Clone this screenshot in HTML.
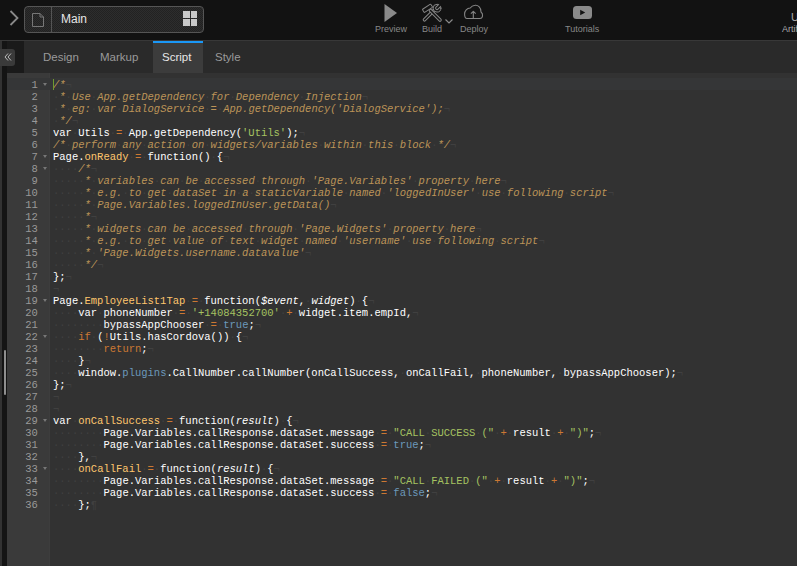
<!DOCTYPE html>
<html><head><meta charset="utf-8">
<style>
*{margin:0;padding:0;box-sizing:border-box}
html,body{width:797px;height:566px;overflow:hidden;background:#121212;font-family:"Liberation Sans",sans-serif}
.abs{position:absolute}
#top{left:0;top:0;width:797px;height:40px;background:#121212}
#topline{left:0;top:40px;width:797px;height:1px;background:#383838}
#lstrip{left:0;top:41px;width:2px;height:525px;background:#323232}
#lblack{left:2px;top:41px;width:5px;height:525px;background:#141414}
#tabdark{left:7px;top:41px;width:17px;height:32px;background:#1a1a1a}
#tabbar{left:24px;top:41px;width:773px;height:32px;background:#2a2a2a}
#collapse{left:0;top:49px;width:15px;height:17px;background:#3a3a3a;border-radius:0 3px 3px 0}
.tab{position:absolute;top:41px;height:32px;font-size:11.5px;color:#9a9a9a;line-height:32px}
#activetab{left:153px;top:41px;width:50px;height:32px;background:#3c3c3c;border-top:2px solid #1b98f7}
#gutter{left:7px;top:73px;width:43px;height:493px;background:#3a3a3a;border-right:1px solid #3d3d3d}
#code{left:50px;top:73px;width:747px;height:493px;background:#323232}
#activeline{left:50px;top:78px;width:747px;height:12px;background:#353637}
#gactive{left:7px;top:78px;width:43px;height:12px;background:#353637}
#glines{left:7px;top:79px;width:43px}
.gl{position:relative;height:12px;line-height:12px;font-family:"Liberation Mono",monospace;font-size:11.5px;color:#999;text-align:right;padding-right:12px}
.gl b{font-weight:normal;display:inline-block;transform:scaleX(0.913);transform-origin:100% 0}
.fw{position:absolute;right:3px;top:4px;width:0;height:0;border-left:2.5px solid transparent;border-right:2.5px solid transparent;border-top:3px solid #777}
#lines{left:53px;top:79px;transform-origin:0 0;transform:scaleX(0.8935)}
.ln{height:12px;line-height:12px;white-space:pre;font-family:"Liberation Mono",monospace;font-size:11.75px;color:#fff}
.c{color:#BC9458;font-style:italic}
.k{color:#CC7833}
.s{color:#A5C261}
.b{color:#6C99BB}
.f{color:#FFC66D}
.p{font-style:italic}
.t{color:#fff}
.i{color:#404040}
#cursor{left:53px;top:79px;width:1px;height:11px;background:#6f9a2e}
#scrollthumb{left:4px;top:350px;width:2px;height:45px;background:#8e8e8e;border-radius:1px}
.tb{position:absolute;top:25px;font-size:9px;color:#888;line-height:8px;white-space:nowrap}
</style></head><body>
<div class="abs" id="top"></div>
<!-- chevron -->
<svg class="abs" style="left:8px;top:8px" width="14" height="20" viewBox="0 0 14 20"><path d="M2.5 3 L9.5 10 L2.5 17" fill="none" stroke="#8a8a8a" stroke-width="1.8"/></svg>
<!-- file box -->
<div class="abs" style="left:24px;top:6px;width:180px;height:27px;border:1px solid #555;border-radius:4px;background:repeating-conic-gradient(#2d2d2d 0 25%,#222 0 50%) 0 0/2px 2px"></div>
<div class="abs" style="left:51px;top:7px;width:1px;height:25px;background:#555"></div>
<svg class="abs" style="left:31px;top:12px" width="15" height="17" viewBox="0 0 15 17"><path d="M1.5 1.5 H9 L12.5 5 V14.5 H1.5 Z M9 1.5 V5 H12.5" fill="none" stroke="#777" stroke-width="1"/></svg>
<div class="abs" style="left:61px;top:11px;font-size:12px;color:#e6e6e6;line-height:16px">Main</div>
<svg class="abs" style="left:182px;top:11px" width="16" height="15" viewBox="0 0 16 15"><rect x="1" y="0" width="7" height="7" fill="#c8c8c8"/><rect x="9" y="0" width="6" height="7" fill="#c8c8c8"/><rect x="1" y="8" width="7" height="7" fill="#c8c8c8"/><rect x="9" y="8" width="6" height="7" fill="#c8c8c8"/></svg>
<!-- toolbar -->
<svg class="abs" style="left:383px;top:3px" width="16" height="21" viewBox="0 0 16 21"><path d="M1.5 1 L14 10 L1.5 19 Z" fill="#8a8a8a"/></svg>
<div class="tb" style="left:375px">Preview</div>
<svg class="abs" style="left:418px;top:0px" width="26" height="26" viewBox="0 0 26 26">
<g stroke-linecap="round">
<line x1="6.5" y1="19.8" x2="15.5" y2="10.8" stroke="#858585" stroke-width="3.6"/>
<line x1="6.5" y1="19.8" x2="15.5" y2="10.8" stroke="#121212" stroke-width="1.5"/>
<circle cx="19" cy="8.2" r="3.9" fill="#121212" stroke="#858585" stroke-width="1"/>
<g transform="translate(19 8.2) rotate(-45)"><rect x="-0.5" y="-1.4" width="5" height="2.8" fill="#121212"/><path d="M3.6 -1.4 H0 A1.4 1.4 0 0 0 0 1.4 H3.6" fill="none" stroke="#858585" stroke-width="1"/></g>
<line x1="12.5" y1="10.5" x2="22" y2="20" stroke="#858585" stroke-width="3.6"/>
<line x1="12.5" y1="10.5" x2="22" y2="20" stroke="#121212" stroke-width="1.5"/>
<g transform="translate(9.5 8.3) rotate(-33)"><rect x="-5" y="-1.9" width="10" height="3.8" rx="0.8" fill="#121212" stroke="#858585" stroke-width="1"/></g>
</g></svg>
<svg class="abs" style="left:444px;top:17.5px" width="10" height="7" viewBox="0 0 10 7"><path d="M1.5 1.5 L5 5 L8.5 1.5" fill="none" stroke="#8a8a8a" stroke-width="1.2"/></svg>
<div class="tb" style="left:422px">Build</div>
<svg class="abs" style="left:458px;top:0px" width="32" height="24" viewBox="0 0 32 24"><g fill="none" stroke="#858585" stroke-width="1.1" stroke-linejoin="round"><path d="M9 18.5 H22 C24.8 18.5 25.6 14 23 12 C23.3 7.8 20 4.8 17 5.3 C15 5.5 13.3 6.5 12.2 8 C9 8.2 6.6 10.8 6.6 14 C6.6 16.5 7.6 18.5 9 18.5 Z"/><path d="M15.3 18.5 V11.3 M12.9 13.7 L15.3 11.3 L17.7 13.7"/></g></svg>
<div class="tb" style="left:460px">Deploy</div>
<svg class="abs" style="left:572px;top:5px" width="21" height="15" viewBox="0 0 21 15"><rect x="1" y="1" width="19" height="13" rx="3.5" fill="#8a8a8a"/><path d="M8.2 4.8 L13.2 7.5 L8.2 10.2 Z" fill="#121212"/></svg>
<div class="tb" style="left:565px">Tutorials</div>
<div class="abs" style="left:791px;top:12px;font-size:11px;color:#aaa;line-height:10px">U</div>
<div class="tb" style="left:782px;color:#aaa">Artifacts</div>

<div class="abs" id="topline"></div>
<div class="abs" id="lstrip"></div>
<div class="abs" id="lblack"></div>
<div class="abs" id="tabdark"></div>
<div class="abs" id="tabbar"></div>
<div class="abs" id="collapse"></div>
<svg class="abs" style="left:3px;top:52px" width="10" height="10" viewBox="0 0 10 10"><path d="M5 1.5 L2 5 L5 8.5 M8 1.5 L5 5 L8 8.5" fill="none" stroke="#bbb" stroke-width="1"/></svg>
<div class="abs" id="activetab"></div>
<div class="tab" style="left:43px">Design</div>
<div class="tab" style="left:100px">Markup</div>
<div class="tab" style="left:162px;color:#e8e8e8">Script</div>
<div class="tab" style="left:215px">Style</div>

<div class="abs" id="gutter"></div>
<div class="abs" id="code"></div>
<div class="abs" id="activeline"></div>
<div class="abs" id="gactive"></div>
<div class="abs" id="glines">
<div class="gl"><b>1</b><span class="fw"></span></div>
<div class="gl"><b>2</b></div>
<div class="gl"><b>3</b></div>
<div class="gl"><b>4</b></div>
<div class="gl"><b>5</b></div>
<div class="gl"><b>6</b></div>
<div class="gl"><b>7</b><span class="fw"></span></div>
<div class="gl"><b>8</b><span class="fw"></span></div>
<div class="gl"><b>9</b></div>
<div class="gl"><b>10</b></div>
<div class="gl"><b>11</b></div>
<div class="gl"><b>12</b></div>
<div class="gl"><b>13</b></div>
<div class="gl"><b>14</b></div>
<div class="gl"><b>15</b></div>
<div class="gl"><b>16</b></div>
<div class="gl"><b>17</b></div>
<div class="gl"><b>18</b></div>
<div class="gl"><b>19</b><span class="fw"></span></div>
<div class="gl"><b>20</b></div>
<div class="gl"><b>21</b></div>
<div class="gl"><b>22</b><span class="fw"></span></div>
<div class="gl"><b>23</b></div>
<div class="gl"><b>24</b></div>
<div class="gl"><b>25</b></div>
<div class="gl"><b>26</b></div>
<div class="gl"><b>27</b></div>
<div class="gl"><b>28</b></div>
<div class="gl"><b>29</b><span class="fw"></span></div>
<div class="gl"><b>30</b></div>
<div class="gl"><b>31</b></div>
<div class="gl"><b>32</b></div>
<div class="gl"><b>33</b><span class="fw"></span></div>
<div class="gl"><b>34</b></div>
<div class="gl"><b>35</b></div>
<div class="gl"><b>36</b></div>
</div>
<div class="abs" id="lines">
<div class="ln"><span class="c">/*</span><span class="i">¬</span></div>
<div class="ln"><span class="i">·</span><span class="c">*</span><span class="i">·</span><span class="c">Use</span><span class="i">·</span><span class="c">App.getDependency</span><span class="i">·</span><span class="c">for</span><span class="i">·</span><span class="c">Dependency</span><span class="i">·</span><span class="c">Injection</span><span class="i">¬</span></div>
<div class="ln"><span class="i">·</span><span class="c">*</span><span class="i">·</span><span class="c">eg:</span><span class="i">·</span><span class="c">var</span><span class="i">·</span><span class="c">DialogService</span><span class="i">·</span><span class="c">=</span><span class="i">·</span><span class="c">App.getDependency(&#x27;DialogService&#x27;);</span><span class="i">¬</span></div>
<div class="ln"><span class="i">·</span><span class="c">*/</span><span class="i">¬</span></div>
<div class="ln"><span class="t">var</span><span class="i">·</span><span class="t">Utils</span><span class="i">·</span><span class="k">=</span><span class="i">·</span><span class="t">App.getDependency(</span><span class="s">&#x27;Utils&#x27;</span><span class="t">);</span><span class="i">¬</span></div>
<div class="ln"><span class="c">/*</span><span class="i">·</span><span class="c">perform</span><span class="i">·</span><span class="c">any</span><span class="i">·</span><span class="c">action</span><span class="i">·</span><span class="c">on</span><span class="i">·</span><span class="c">widgets/variables</span><span class="i">·</span><span class="c">within</span><span class="i">·</span><span class="c">this</span><span class="i">·</span><span class="c">block</span><span class="i">·</span><span class="c">*/</span><span class="i">¬</span></div>
<div class="ln"><span class="t">Page.</span><span class="f">onReady</span><span class="i">·</span><span class="k">=</span><span class="i">·</span><span class="t">function()</span><span class="i">·</span><span class="t">{</span><span class="i">¬</span></div>
<div class="ln"><span class="i">·</span><span class="i">·</span><span class="i">·</span><span class="i">·</span><span class="c">/*</span><span class="i">¬</span></div>
<div class="ln"><span class="i">·</span><span class="i">·</span><span class="i">·</span><span class="i">·</span><span class="i">·</span><span class="c">*</span><span class="i">·</span><span class="c">variables</span><span class="i">·</span><span class="c">can</span><span class="i">·</span><span class="c">be</span><span class="i">·</span><span class="c">accessed</span><span class="i">·</span><span class="c">through</span><span class="i">·</span><span class="c">&#x27;Page.Variables&#x27;</span><span class="i">·</span><span class="c">property</span><span class="i">·</span><span class="c">here</span><span class="i">¬</span></div>
<div class="ln"><span class="i">·</span><span class="i">·</span><span class="i">·</span><span class="i">·</span><span class="i">·</span><span class="c">*</span><span class="i">·</span><span class="c">e.g.</span><span class="i">·</span><span class="c">to</span><span class="i">·</span><span class="c">get</span><span class="i">·</span><span class="c">dataSet</span><span class="i">·</span><span class="c">in</span><span class="i">·</span><span class="c">a</span><span class="i">·</span><span class="c">staticVariable</span><span class="i">·</span><span class="c">named</span><span class="i">·</span><span class="c">&#x27;loggedInUser&#x27;</span><span class="i">·</span><span class="c">use</span><span class="i">·</span><span class="c">following</span><span class="i">·</span><span class="c">script</span><span class="i">¬</span></div>
<div class="ln"><span class="i">·</span><span class="i">·</span><span class="i">·</span><span class="i">·</span><span class="i">·</span><span class="c">*</span><span class="i">·</span><span class="c">Page.Variables.loggedInUser.getData()</span><span class="i">¬</span></div>
<div class="ln"><span class="i">·</span><span class="i">·</span><span class="i">·</span><span class="i">·</span><span class="i">·</span><span class="c">*</span><span class="i">¬</span></div>
<div class="ln"><span class="i">·</span><span class="i">·</span><span class="i">·</span><span class="i">·</span><span class="i">·</span><span class="c">*</span><span class="i">·</span><span class="c">widgets</span><span class="i">·</span><span class="c">can</span><span class="i">·</span><span class="c">be</span><span class="i">·</span><span class="c">accessed</span><span class="i">·</span><span class="c">through</span><span class="i">·</span><span class="c">&#x27;Page.Widgets&#x27;</span><span class="i">·</span><span class="c">property</span><span class="i">·</span><span class="c">here</span><span class="i">¬</span></div>
<div class="ln"><span class="i">·</span><span class="i">·</span><span class="i">·</span><span class="i">·</span><span class="i">·</span><span class="c">*</span><span class="i">·</span><span class="c">e.g.</span><span class="i">·</span><span class="c">to</span><span class="i">·</span><span class="c">get</span><span class="i">·</span><span class="c">value</span><span class="i">·</span><span class="c">of</span><span class="i">·</span><span class="c">text</span><span class="i">·</span><span class="c">widget</span><span class="i">·</span><span class="c">named</span><span class="i">·</span><span class="c">&#x27;username&#x27;</span><span class="i">·</span><span class="c">use</span><span class="i">·</span><span class="c">following</span><span class="i">·</span><span class="c">script</span><span class="i">¬</span></div>
<div class="ln"><span class="i">·</span><span class="i">·</span><span class="i">·</span><span class="i">·</span><span class="i">·</span><span class="c">*</span><span class="i">·</span><span class="c">&#x27;Page.Widgets.username.datavalue&#x27;</span><span class="i">¬</span></div>
<div class="ln"><span class="i">·</span><span class="i">·</span><span class="i">·</span><span class="i">·</span><span class="i">·</span><span class="c">*/</span><span class="i">¬</span></div>
<div class="ln"><span class="t">};</span><span class="i">¬</span></div>
<div class="ln"><span class="i">¬</span></div>
<div class="ln"><span class="t">Page.</span><span class="f">EmployeeList1Tap</span><span class="i">·</span><span class="k">=</span><span class="i">·</span><span class="t">function(</span><span class="p">$event</span><span class="t">,</span><span class="i">·</span><span class="p">widget</span><span class="t">)</span><span class="i">·</span><span class="t">{</span><span class="i">¬</span></div>
<div class="ln"><span class="i">·</span><span class="i">·</span><span class="i">·</span><span class="i">·</span><span class="t">var</span><span class="i">·</span><span class="t">phoneNumber</span><span class="i">·</span><span class="k">=</span><span class="i">·</span><span class="s">&#x27;+14084352700&#x27;</span><span class="i">·</span><span class="k">+</span><span class="i">·</span><span class="t">widget.item.empId,</span><span class="i">¬</span></div>
<div class="ln"><span class="i">·</span><span class="i">·</span><span class="i">·</span><span class="i">·</span><span class="i">·</span><span class="i">·</span><span class="i">·</span><span class="i">·</span><span class="t">bypassAppChooser</span><span class="i">·</span><span class="k">=</span><span class="i">·</span><span class="b">true</span><span class="t">;</span><span class="i">¬</span></div>
<div class="ln"><span class="i">·</span><span class="i">·</span><span class="i">·</span><span class="i">·</span><span class="k">if</span><span class="i">·</span><span class="t">(</span><span class="k">!</span><span class="t">Utils.hasCordova())</span><span class="i">·</span><span class="t">{</span><span class="i">¬</span></div>
<div class="ln"><span class="i">·</span><span class="i">·</span><span class="i">·</span><span class="i">·</span><span class="i">·</span><span class="i">·</span><span class="i">·</span><span class="i">·</span><span class="k">return</span><span class="t">;</span><span class="i">¬</span></div>
<div class="ln"><span class="i">·</span><span class="i">·</span><span class="i">·</span><span class="i">·</span><span class="t">}</span><span class="i">¬</span></div>
<div class="ln"><span class="i">·</span><span class="i">·</span><span class="i">·</span><span class="i">·</span><span class="t">window.</span><span class="b">plugins</span><span class="t">.CallNumber.callNumber(onCallSuccess,</span><span class="i">·</span><span class="t">onCallFail,</span><span class="i">·</span><span class="t">phoneNumber,</span><span class="i">·</span><span class="t">bypassAppChooser);</span><span class="i">¬</span></div>
<div class="ln"><span class="t">};</span><span class="i">¬</span></div>
<div class="ln"><span class="i">¬</span></div>
<div class="ln"><span class="i">¬</span></div>
<div class="ln"><span class="t">var</span><span class="i">·</span><span class="f">onCallSuccess</span><span class="i">·</span><span class="k">=</span><span class="i">·</span><span class="t">function(</span><span class="p">result</span><span class="t">)</span><span class="i">·</span><span class="t">{</span><span class="i">¬</span></div>
<div class="ln"><span class="i">·</span><span class="i">·</span><span class="i">·</span><span class="i">·</span><span class="i">·</span><span class="i">·</span><span class="i">·</span><span class="i">·</span><span class="t">Page.Variables.callResponse.dataSet.message</span><span class="i">·</span><span class="k">=</span><span class="i">·</span><span class="s">&quot;CALL</span><span class="i">·</span><span class="s">SUCCESS</span><span class="i">·</span><span class="s">(&quot;</span><span class="i">·</span><span class="k">+</span><span class="i">·</span><span class="t">result</span><span class="i">·</span><span class="k">+</span><span class="i">·</span><span class="s">&quot;)&quot;</span><span class="t">;</span><span class="i">¬</span></div>
<div class="ln"><span class="i">·</span><span class="i">·</span><span class="i">·</span><span class="i">·</span><span class="i">·</span><span class="i">·</span><span class="i">·</span><span class="i">·</span><span class="t">Page.Variables.callResponse.dataSet.success</span><span class="i">·</span><span class="k">=</span><span class="i">·</span><span class="b">true</span><span class="t">;</span><span class="i">¬</span></div>
<div class="ln"><span class="i">·</span><span class="i">·</span><span class="i">·</span><span class="i">·</span><span class="t">},</span><span class="i">¬</span></div>
<div class="ln"><span class="i">·</span><span class="i">·</span><span class="i">·</span><span class="i">·</span><span class="f">onCallFail</span><span class="i">·</span><span class="k">=</span><span class="i">·</span><span class="t">function(</span><span class="p">result</span><span class="t">)</span><span class="i">·</span><span class="t">{</span><span class="i">¬</span></div>
<div class="ln"><span class="i">·</span><span class="i">·</span><span class="i">·</span><span class="i">·</span><span class="i">·</span><span class="i">·</span><span class="i">·</span><span class="i">·</span><span class="t">Page.Variables.callResponse.dataSet.message</span><span class="i">·</span><span class="k">=</span><span class="i">·</span><span class="s">&quot;CALL</span><span class="i">·</span><span class="s">FAILED</span><span class="i">·</span><span class="s">(&quot;</span><span class="i">·</span><span class="k">+</span><span class="i">·</span><span class="t">result</span><span class="i">·</span><span class="k">+</span><span class="i">·</span><span class="s">&quot;)&quot;</span><span class="t">;</span><span class="i">¬</span></div>
<div class="ln"><span class="i">·</span><span class="i">·</span><span class="i">·</span><span class="i">·</span><span class="i">·</span><span class="i">·</span><span class="i">·</span><span class="i">·</span><span class="t">Page.Variables.callResponse.dataSet.success</span><span class="i">·</span><span class="k">=</span><span class="i">·</span><span class="b">false</span><span class="t">;</span><span class="i">¬</span></div>
<div class="ln"><span class="i">·</span><span class="i">·</span><span class="i">·</span><span class="i">·</span><span class="t">};</span><span class="i">¶</span></div>
</div>
<div class="abs" id="cursor"></div>
<div class="abs" id="scrollthumb"></div>
</body></html>
